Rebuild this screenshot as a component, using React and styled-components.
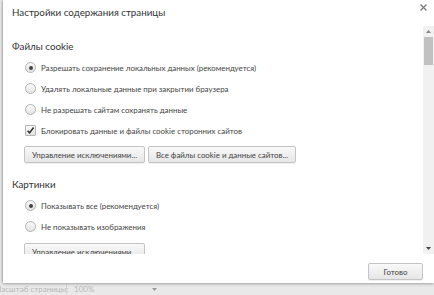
import React from "react";
import styled, { createGlobalStyle } from "styled-components";

const Global = createGlobalStyle`
  html, body { margin: 0; padding: 0; }
  body {
    background: #e9e9e9;
    font-family: Lato, "Open Sans", sans-serif;
    overflow: hidden;
  }
`;

const Screen = styled.div`
  width: 434px;
  height: 295px;
  display: flex;
  flex-direction: column;
  overflow: hidden;
`;

const Dialog = styled.div`
  height: 283px;
  margin-left: 3px;
  background: #fff;
  box-shadow: -1px 0 2px rgba(0, 0, 0, 0.18), 0 1px 3px rgba(0, 0, 0, 0.25);
  display: flex;
  flex-direction: column;
  position: relative;
  z-index: 1;
`;

const Header = styled.div`
  height: 26px;
  display: flex;
  align-items: center;
  justify-content: space-between;
  padding: 0 6px 0 9px;
  flex-shrink: 0;
`;

const Title = styled.div`
  font-size: 9.8px;
  color: #333;
  margin-top: -3px;
  white-space: nowrap;
`;

const Close = styled.div`
  width: 9px;
  height: 9px;
  display: flex;
  align-self: flex-start;
  margin-top: 3px;
`;

const Body = styled.div`
  display: flex;
  height: 228px;
  flex-shrink: 0;
`;

const Scroller = styled.div`
  flex: 1;
  overflow: hidden;
`;

const Heading = styled.div`
  font-size: 9.8px;
  color: #333;
  line-height: 21px;
  margin-top: ${(p) => p.$top}px;
  padding-left: 9px;
  white-space: nowrap;
`;

const Row = styled.div`
  height: 21px;
  display: flex;
  align-items: center;
  gap: 5px;
  padding-left: 22px;
  font-size: 7.9px;
  color: #444;
  white-space: nowrap;
`;

const Radio = styled.span`
  width: 9px;
  height: 9px;
  border-radius: 50%;
  border: 1px solid #b4b4b4;
  background: linear-gradient(#fafafa, #e4e4e4);
  display: flex;
  align-items: center;
  justify-content: center;
  box-sizing: content-box;
  flex-shrink: 0;
  &::after {
    content: "";
    width: 4px;
    height: 4px;
    border-radius: 50%;
    background: ${(p) => (p.$checked ? "#444" : "transparent")};
  }
`;

const Check = styled.span`
  width: 9px;
  height: 9px;
  border: 1px solid #b4b4b4;
  border-radius: 1px;
  background: linear-gradient(#fafafa, #e4e4e4);
  display: flex;
  align-items: center;
  justify-content: center;
  flex-shrink: 0;
`;

const Buttons = styled.div`
  display: flex;
  gap: 3px;
  padding-left: 21px;
  margin-top: ${(p) => p.$top}px;
`;

const Button = styled.button`
  height: 17px;
  width: ${(p) => p.$w}px;
  padding: 0;
  border: 1px solid #c4c4c4;
  border-radius: 2px;
  background: linear-gradient(#f9f9f9, #e6e6e6);
  box-shadow: 0 1px 0 rgba(0, 0, 0, 0.06);
  font-family: inherit;
  font-size: 7.9px;
  color: #444;
  flex-shrink: 0;
  white-space: nowrap;
  overflow: hidden;
`;

const Scrollbar = styled.div`
  width: 11px;
  background: #f1f1f1;
  display: flex;
  flex-direction: column;
  align-items: stretch;
  flex-shrink: 0;
`;

const Arrow = styled.div`
  height: 11px;
  display: flex;
  align-items: center;
  justify-content: center;
`;

const Thumb = styled.div`
  height: 28px;
  margin: 0 1px;
  background: #c1c1c1;
`;

const Spacer = styled.div`
  flex: 1;
`;

const Footer = styled.div`
  flex: 1;
  display: flex;
  align-items: flex-start;
  justify-content: flex-end;
  padding: 9px 11px 0 0;
`;

const Strip = styled.div`
  flex: 1;
  display: flex;
  align-items: center;
  font-size: 8px;
  color: #b8b8b8;
  white-space: nowrap;
  overflow: hidden;
`;

const StripLabel = styled.span`
  margin-left: -6px;
  width: 72px;
  flex-shrink: 0;
`;

const StripValue = styled.span`
  border-left: 1px solid #d4d4d4;
  padding-left: 7px;
  width: 78px;
  flex-shrink: 0;
`;

const CloseIcon = () => (
  <svg width="9" height="9" viewBox="0 0 9 9">
    <path d="M1.5 1.5 L7.5 7.5 M7.5 1.5 L1.5 7.5" stroke="#7a7a7a" strokeWidth="1.3" />
  </svg>
);

const Tick = () => (
  <svg width="9" height="9" viewBox="0 0 9 9">
    <path d="M1.6 4.8 L3.6 6.8 L7.6 1.6" stroke="#333" strokeWidth="1.6" fill="none" />
  </svg>
);

const Tri = ({ up, color = "#555" }) => (
  <svg width="5" height="3" viewBox="0 0 5 3">
    <path d={up ? "M0 3 L2.5 0 L5 3 Z" : "M0 0 L5 0 L2.5 3 Z"} fill={color} />
  </svg>
);

const RadioRow = ({ checked, children }) => (
  <Row>
    <Radio $checked={checked} />
    {children}
  </Row>
);

export default function App() {
  return (
    <>
      <Global />
      <Screen>
        <Dialog>
          <Header>
            <Title>Настройки содержания страницы</Title>
            <Close>
              <CloseIcon />
            </Close>
          </Header>
          <Body>
            <Scroller>
              <Heading $top={10}>Файлы cookie</Heading>
              <RadioRow checked>Разрешать сохранение локальных данных (рекомендуется)</RadioRow>
              <RadioRow>Удалять локальные данные при закрытии браузера</RadioRow>
              <RadioRow>Не разрешать сайтам сохранять данные</RadioRow>
              <Row>
                <Check>
                  <Tick />
                </Check>
                Блокировать данные и файлы cookie сторонних сайтов
              </Row>
              <Buttons $top={5}>
                <Button $w={121}>Управление исключениями...</Button>
                <Button $w={148}>Все файлы cookie и данные сайтов...</Button>
              </Buttons>
              <Heading $top={11}>Картинки</Heading>
              <RadioRow checked>Показывать все (рекомендуется)</RadioRow>
              <RadioRow>Не показывать изображения</RadioRow>
              <Buttons $top={6}>
                <Button $w={121}>Управление исключениями...</Button>
              </Buttons>
            </Scroller>
            <Scrollbar>
              <Arrow>
                <Tri up color="#888" />
              </Arrow>
              <Thumb />
              <Spacer />
              <Arrow>
                <Tri color="#444" />
              </Arrow>
            </Scrollbar>
          </Body>
          <Footer>
            <Button $w={55}>Готово</Button>
          </Footer>
        </Dialog>
        <Strip>
          <StripLabel>Масштаб страницы:</StripLabel>
          <StripValue>100%</StripValue>
          <Tri color="#9a9a9a" />
        </Strip>
      </Screen>
    </>
  );
}
